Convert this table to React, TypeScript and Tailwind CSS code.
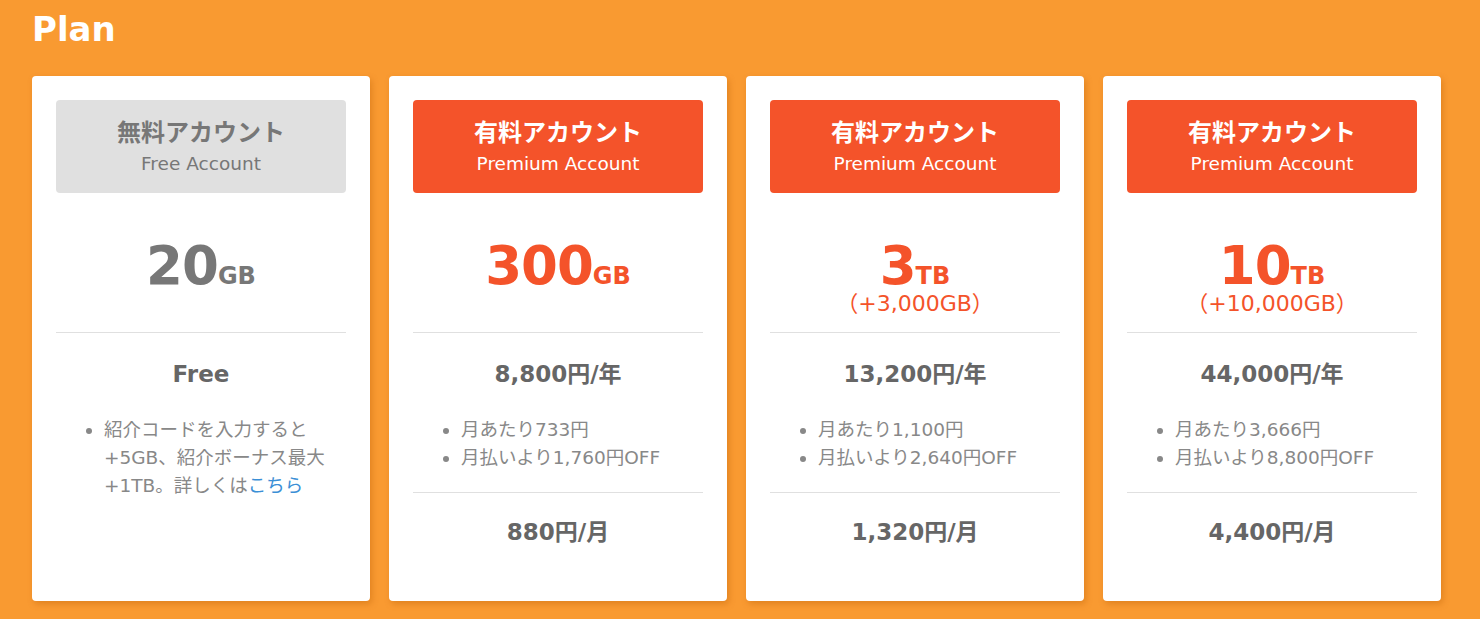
type Plan = {
	title: string;
	sub: string;
	free?: boolean;
	amount: string;
	unit: string;
	extra?: string;
	price: string;
	notes: React.ReactNode[];
	monthly?: string;
};

const plans: Plan[] = [
	{
		title: "無料アカウント",
		sub: "Free Account",
		free: true,
		amount: "20",
		unit: "GB",
		price: "Free",
		notes: [
			<>
				紹介コードを入力すると+5GB、紹介ボーナス最大+1TB。詳しくは
				<a className="text-[#3b8fd6]" href="#">
					こちら
				</a>
			</>,
		],
	},
	{
		title: "有料アカウント",
		sub: "Premium Account",
		amount: "300",
		unit: "GB",
		price: "8,800円/年",
		notes: ["月あたり733円", "月払いより1,760円OFF"],
		monthly: "880円/月",
	},
	{
		title: "有料アカウント",
		sub: "Premium Account",
		amount: "3",
		unit: "TB",
		extra: "（+3,000GB）",
		price: "13,200円/年",
		notes: ["月あたり1,100円", "月払いより2,640円OFF"],
		monthly: "1,320円/月",
	},
	{
		title: "有料アカウント",
		sub: "Premium Account",
		amount: "10",
		unit: "TB",
		extra: "（+10,000GB）",
		price: "44,000円/年",
		notes: ["月あたり3,666円", "月払いより8,800円OFF"],
		monthly: "4,400円/月",
	},
];

function PlanCard({ plan }: { plan: Plan }) {
	const accent = plan.free ? "text-[#777777]" : "text-[#f4532a]";
	return (
		<div className="flex-1 rounded-[4px] bg-white px-6 pt-6 shadow-[2px_3px_6px_rgba(180,90,0,0.35)]">
			<div
				className={`flex h-[93px] flex-col items-center justify-center rounded-[4px] ${
					plan.free ? "bg-[#e0e0e0] text-[#777777]" : "bg-[#f4532a] text-white"
				}`}
			>
				<div className="text-[24px] font-bold leading-[34px]">{plan.title}</div>
				<div className="text-[18.5px] leading-[28px]">{plan.sub}</div>
			</div>
			<div className="flex h-[140px] flex-col items-center border-b border-[#e0e0e0] pt-[51px]">
				<div className={`flex h-[44px] items-baseline font-bold leading-[44px] ${accent}`}>
					<span className="text-[53px] tracking-[-1px]">{plan.amount}</span>
					<span className="text-[24px]">{plan.unit}</span>
				</div>
				{plan.extra && (
					<div className={`mt-[1px] text-[22px] leading-[30px] ${accent}`}>
						{plan.extra}
					</div>
				)}
			</div>
			<div
				className={`pb-[20px] pt-[26px] ${
					plan.monthly ? "border-b border-[#e0e0e0]" : ""
				}`}
			>
				<div className="text-center text-[23px] font-bold leading-[30px] text-[#666666]">
					{plan.price}
				</div>
				<ul className="mt-[27px] list-disc pl-[48px] text-[18.5px] leading-[28px] text-[#888888] marker:text-[#888888]">
					{plan.notes.map((n, i) => (
						<li key={i}>{n}</li>
					))}
				</ul>
			</div>
			{plan.monthly && (
				<div className="pt-[24px] text-center text-[23px] font-bold leading-[30px] text-[#666666]">
					{plan.monthly}
				</div>
			)}
		</div>
	);
}

export default function App() {
	return (
		<div
			className="min-h-[619px] bg-[#f99a31] px-8 pb-[18px] pt-[6px]"
			style={{ fontFamily: '"DejaVu Sans", "Noto Sans CJK JP", sans-serif' }}
		>
			<h1 className="text-[34px] font-bold leading-[46px] text-white">Plan</h1>
			<div className="mt-[24px] flex h-[525px] gap-[19px] pr-[7px]">
				{plans.map((p, i) => (
					<PlanCard key={i} plan={p} />
				))}
			</div>
		</div>
	);
}
